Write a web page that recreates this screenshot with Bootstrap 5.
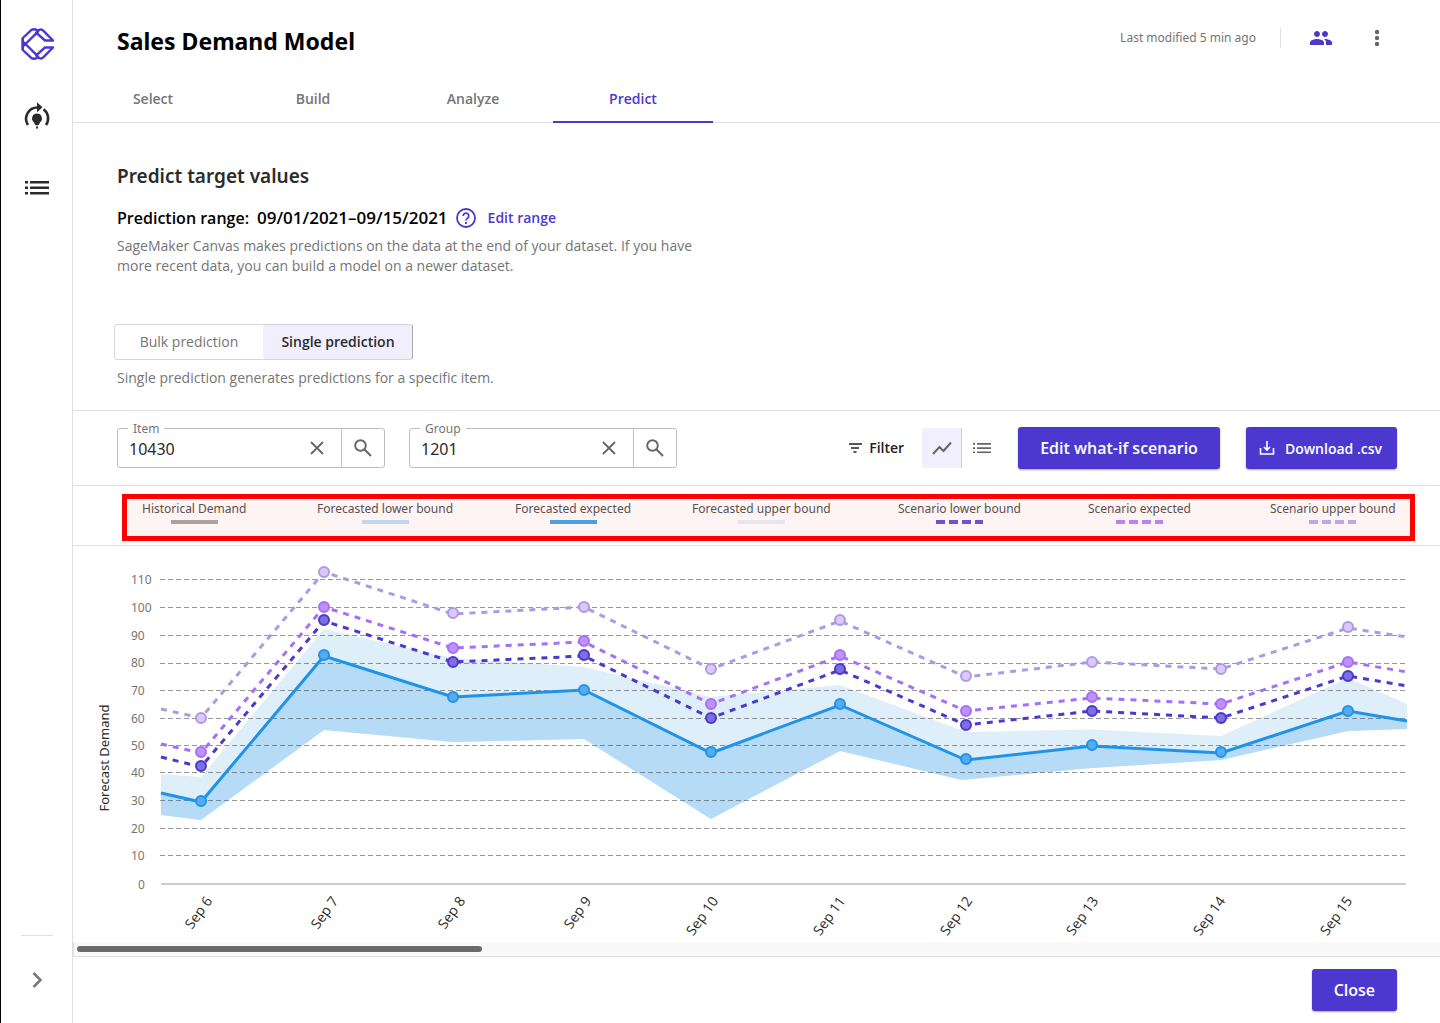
<!DOCTYPE html>
<html lang="en">
<head>
<meta charset="utf-8">
<meta name="viewport" content="width=device-width, initial-scale=1">
<title>Sales Demand Model</title>
<link href="https://cdn.jsdelivr.net/npm/bootstrap@5.3.0/dist/css/bootstrap.min.css" rel="stylesheet">
<style>
:root{--brand:#4d38cf;--line:#e0e0e0;--muted:#757575;--ink:#2b2b2b}
body{font-family:"Open Sans","Noto Sans",sans-serif;font-size:14px;line-height:20px;color:var(--ink)}
button{font-family:inherit}
svg{display:block;flex:none}
h1,h2{font-family:"Noto Sans","Open Sans",sans-serif}
.side{width:73px;border-left:1px solid #000;border-right:1px solid var(--line);padding:28px 0 31px}
.side .top-nav{gap:44px}
.side .rule{width:32px;border-top:1px solid var(--line);margin-bottom:32px}
.icon-btn{background:none;border:0;padding:0;color:inherit}
.head{border-bottom:1px solid var(--line)}
.head h1{font-size:23px;line-height:32px;font-weight:700;color:#000}
.head .bar{padding:25px 51px 0 44px;height:76px}
.head .meta{font-family:"Noto Sans","Open Sans",sans-serif;font-size:12px;line-height:26px;color:var(--muted)}
.head .split{height:20px;border-left:1px solid var(--line)}
.steps .nav-link{width:160px;height:47px;padding:13px 0 0;margin-bottom:-1px;text-align:center;font-weight:600;color:var(--muted);border-bottom:2px solid transparent}
.steps .nav-link.active{color:var(--brand);border-color:var(--brand)}
.intro{padding:39px 44px 22px}
.intro h2{font-size:19px;line-height:28px;font-weight:600}
.intro .range{font-size:16px;font-weight:600;color:#000;margin-top:18px;gap:8px}
.intro .range .dates{font-size:17px}
.intro .range a{font-size:14px;color:var(--brand);text-decoration:none;margin-left:4px}
.intro p{color:var(--muted);max-width:580px}
.modes{width:299px;height:36px;margin:48px 0 8px -3px}
.modes .btn{font-size:14px;line-height:18px;border-color:#d6d6d6;border-radius:3px;color:var(--muted);flex:1 1 0;padding:0}
.modes .btn.active{background:#f1effd;color:var(--ink);font-weight:600;border-color:#d6d3e0 #aaa #d6d3e0 #f1effd}
.tools{border-top:1px solid var(--line);border-bottom:1px solid var(--line);padding:16px 43px 16px 44px}
.picker{width:268px;height:40px;border:1px solid #bdbdbd;border-radius:3px;position:relative;color:#666;font-family:"Noto Sans","Open Sans",sans-serif}
.picker label{position:absolute;top:-9px;left:10px;padding:0 5px;background:#fff;font-size:12px;line-height:18px;color:var(--muted)}
.picker input{border:0;outline:0;background:none;min-width:0;padding:2px 0 0 11px;font-size:16px;color:var(--ink)}
.picker .seek{width:43px;flex:none;border-left:1px solid #bdbdbd}
.filter{font-weight:600;gap:7px;color:#222;margin-right:18px}
.view{width:40px;height:40px;color:#666}
.view.on{background:#f1effd;border-right:1px solid #cfcbe2;border-radius:3px 0 0 3px}
.cta{background:var(--brand);color:#fff;border:0;border-radius:3px;height:42px;font-size:16px;font-weight:600;padding:0 22px;box-shadow:0 1px 2px rgba(0,0,0,.35)}
.cta:hover{background:#4330b8;color:#fff}
.cta.slim{font-size:14px;padding:0 15px 0 13px;gap:10px;margin-left:26px}
.legend-wrap{border-bottom:1px solid var(--line);padding:8px 25px 4px 49px}
.legend-box{border:5px solid red;background:#fff4f4;height:47px;padding:0 12px 0 15px;display:grid;grid-template-columns:175fr 198fr 177fr 206fr 190fr 182fr 128fr;font-family:"Noto Sans","Open Sans",sans-serif;font-size:12px;line-height:20px;color:#5a5050}
.legend-box i{width:47px;height:4px;margin-top:1px}
.legend-box i.dash{background:repeating-linear-gradient(90deg,var(--c) 0 9px,transparent 9px 13px)}
.track{background:#f9f9f9;height:14px;padding:4px;border-left:1px solid var(--line)}
.thumb{height:6px;border-radius:3px;background:#6b6b6b;width:29.8%;margin-left:-1px}
.foot{border-top:1px solid var(--line);padding:12px 43px}
.plot text{font-family:"Open Sans","Noto Sans",sans-serif}
.plot .ticks text,.plot .axis-name{font-family:"Noto Sans","Open Sans",sans-serif}
</style>
<script src="https://cdn.jsdelivr.net/npm/bootstrap@5.3.0/dist/js/bootstrap.bundle.min.js"></script>
</head>
<body>
<div class="d-flex min-vh-100">
<aside class="side d-flex flex-column align-items-center justify-content-between flex-shrink-0">
  <nav class="top-nav d-flex flex-column align-items-center" aria-label="Main">
    <a href="#" aria-label="Home"><svg width="36" height="32" viewBox="0 0 36 32" fill="none" stroke="#4d38cf" stroke-width="2.400" stroke-linejoin="round"><path d="M34 12.500 24.500 2.800Q22.500 .8 20 2L17.200 4.600 26 12.500ZM19.500 3.200Q16 .2 12.500 1.800L3.800 10V13Q4.500 15.500 7 15.500L19.500 3.200M3.500 10V22M34 19.500 24.500 29.200Q22.500 31.200 20 30L17.200 27.400 26 19.500ZM19.500 28.800Q16 31.800 12.500 30.200L3.800 22V19Q4.500 16.500 7 16.500L19.500 28.800"/></svg></a>
    <a href="#" aria-label="Models"><svg width="28" height="28" viewBox="0 3 28 28" overflow="visible" fill="none" stroke="#2b2b2b" stroke-width="2.600"><path d="M5 24A11.300 11.300 0 0 1 15 6.500M20.500 8.300A11.300 11.300 0 0 1 23 24"/><path d="M14 1.200 19.500 6.200 14 11.200Z" fill="#2b2b2b" stroke="none"/><path d="M14 12.400a5 5 0 0 0-3.200 8.800l1.700 3h3l1.700-3A5 5 0 0 0 14 12.400ZM13 25.400h2v2h-2z" fill="#2b2b2b" stroke="none"/></svg></a>
    <a href="#" aria-label="Datasets"><svg width="28" height="28" viewBox="0 2 28 28" fill="#2b2b2b"><path d="M2 7h3v2.600H2zM7 7h19v2.600H7zM2 12.500h3v2.600H2zM7 12.500h19v2.600H7zM2 18h3v2.600H2zM7 18h19v2.600H7z"/></svg></a>
  </nav>
  <div class="d-flex flex-column align-items-center">
    <div class="rule"></div>
    <button class="icon-btn" aria-label="Expand"><svg width="24" height="24" viewBox="0 0 24 24" fill="none" stroke="#7a7a7a" stroke-width="2.500"><path d="m8.500 5 7 7-7 7"/></svg></button>
  </div>
</aside>
<main class="flex-grow-1 d-flex flex-column">
  <header class="head">
    <div class="bar d-flex justify-content-between align-items-start">
      <h1 class="m-0">Sales Demand Model</h1>
      <div class="d-flex align-items-center meta">
        <span>Last modified 5 min ago</span>
        <span class="split ms-4 me-4"></span>
        <button class="icon-btn ms-1" aria-label="Share"><svg width="24" height="24" viewBox="0 0 24 24" fill="#4d38cf"><path d="M16 11c1.660 0 3-1.340 3-3s-1.340-3-3-3-3 1.340-3 3 1.340 3 3 3zm-8 0c1.660 0 3-1.340 3-3S9.660 5 8 5 5 6.340 5 8s1.340 3 3 3zm0 2c-2.330 0-7 1.170-7 3.500V19h14v-2.500C15 14.170 10.330 13 8 13zm8 0c-.29 0-.62.02-.97.05C16.190 13.890 17 15.020 17 16.500V19h6v-2.500c0-2.330-4.670-3.500-7-3.500z"/></svg></button>
        <button class="icon-btn ms-4" aria-label="More"><svg class="ms-2" width="24" height="24" viewBox="0 0 24 24" fill="#666"><circle cx="12" cy="6" r="2.200"/><circle cx="12" cy="12" r="2.200"/><circle cx="12" cy="18" r="2.200"/></svg></button>
      </div>
    </div>
    <nav class="nav steps">
      <a class="nav-link" href="#">Select</a><a class="nav-link" href="#">Build</a><a class="nav-link" href="#">Analyze</a><a class="nav-link active" aria-current="page" href="#">Predict</a>
    </nav>
  </header>
  <section class="intro">
    <h2 class="m-0">Predict target values</h2>
    <div class="range d-flex align-items-center"><span>Prediction range:</span><span class="dates">09/01/2021–09/15/2021</span>
      <button class="icon-btn" aria-label="Help"><svg width="20" height="20" viewBox="0 0 20 20" fill="none" stroke="#4d38cf" stroke-width="1.800"><circle cx="10" cy="10" r="9"/><path d="M7.200 8a2.800 2.800 0 1 1 4.500 2.100C10.600 11 10 11.300 10 12.600M10 14v2"/></svg></button>
      <a href="#">Edit range</a></div>
    <p class="mb-0 mt-2">SageMaker Canvas makes predictions on the data at the end of your dataset. If you have more recent data, you can build a model on a newer dataset.</p>
    <div class="modes btn-group d-flex" role="group"><button class="btn">Bulk prediction</button><button class="btn active">Single prediction</button></div>
    <p class="mb-0">Single prediction generates predictions for a specific item.</p>
  </section>
  <section class="tools d-flex align-items-center">
    <div class="picker d-flex me-4"><label for="item">Item</label><input id="item" class="flex-grow-1" value="10430">
      <button class="icon-btn px-3" aria-label="Clear item"><svg width="16" height="16" viewBox="0 0 16 16" fill="none" stroke="currentColor" stroke-width="1.800"><path d="m2 2 12 12M14 2 2 14"/></svg></button>
      <button class="icon-btn seek d-flex align-items-center justify-content-center" aria-label="Search item"><svg width="20" height="20" viewBox="0 0 20 20" fill="none" stroke="currentColor" stroke-width="1.900"><circle cx="7.500" cy="7.500" r="5.300"/><path d="m11.500 11.500 6.500 6.500"/></svg></button></div>
    <div class="picker d-flex"><label for="group">Group</label><input id="group" class="flex-grow-1" value="1201">
      <button class="icon-btn px-3" aria-label="Clear group"><svg width="16" height="16" viewBox="0 0 16 16" fill="none" stroke="currentColor" stroke-width="1.800"><path d="m2 2 12 12M14 2 2 14"/></svg></button>
      <button class="icon-btn seek d-flex align-items-center justify-content-center" aria-label="Search group"><svg width="20" height="20" viewBox="0 0 20 20" fill="none" stroke="currentColor" stroke-width="1.900"><circle cx="7.500" cy="7.500" r="5.300"/><path d="m11.500 11.500 6.500 6.500"/></svg></button></div>
    <div class="ms-auto d-flex align-items-center">
      <button class="icon-btn filter d-flex align-items-center"><svg width="14" height="14" viewBox="0 0 14 14" stroke="#222" stroke-width="1.600"><path d="M1 3h13M3 7h8M5.500 11h3"/></svg>Filter</button>
      <button class="icon-btn view on d-flex align-items-center justify-content-center" aria-label="Chart view"><svg width="24" height="24" viewBox="0 0 24 24" fill="none" stroke="currentColor" stroke-width="2"><path d="m3 18 6.500-7 4 4L21 6.500"/></svg></button>
      <button class="icon-btn view d-flex align-items-center justify-content-center" aria-label="Table view"><svg width="20" height="16" viewBox="0 0 20 16" fill="currentColor"><path d="M1 3h2v1.700H1zM5 3h14v1.700H5zM1 7.200h2v1.700H1zM5 7.200h14v1.700H5zM1 11.400h2v1.700H1zM5 11.400h14v1.700H5z"/></svg></button>
      <button class="btn cta ms-3">Edit what-if scenario</button>
      <button class="btn cta slim d-flex align-items-center"><svg width="16" height="16" viewBox="0 0 16 16" fill="none" stroke="#fff" stroke-width="1.600"><path d="M1.500 8v6h13V8M8 1v9M5 7l3 3 3-3"/></svg>Download .csv</button>
    </div>
  </section>
  <section class="legend-wrap">
    <div class="legend-box text-nowrap">
      <div><div class="d-inline-flex flex-column align-items-center">Historical Demand<i style="background:#aca0a0"></i></div></div>
      <div><div class="d-inline-flex flex-column align-items-center">Forecasted lower bound<i style="background:#c0d8ee"></i></div></div>
      <div><div class="d-inline-flex flex-column align-items-center">Forecasted expected<i style="background:#4c9fe0"></i></div></div>
      <div><div class="d-inline-flex flex-column align-items-center">Forecasted upper bound<i style="background:#e6e6f0"></i></div></div>
      <div><div class="d-inline-flex flex-column align-items-center">Scenario lower bound<i class="dash" style="--c:#7152cc"></i></div></div>
      <div><div class="d-inline-flex flex-column align-items-center">Scenario expected<i class="dash" style="--c:#b983f3"></i></div></div>
      <div><div class="d-inline-flex flex-column align-items-center">Scenario upper bound<i class="dash" style="--c:#c0a6e4"></i></div></div>
    </div>
  </section>
  <section class="plot">
    <svg width="100%" viewBox="73 546 1367 396" role="img" aria-label="Forecast demand by day">
      <path fill="#dfeffa" d="M161 774 201 777 324 629 453 658 584 667 711 697 840 685 966 732 1092 729.500 1221 736 1348 678 1407 704V729L1348 731 1221 760 1092 768 962 780 840 751 711 819 584 739 453 742 324 730 201 820 161 815Z"/>
      <path fill="#b6dbf7" d="M161 793 201 802 324 656 453 698 584 691 711 753 840 705 966 760 1092 746 1221 753 1348 712 1407 721V729L1348 731 1221 760 1092 768 962 780 840 751 711 819 584 739 453 742 324 730 201 820 161 815Z"/>
      <path stroke="#333" stroke-opacity=".5" stroke-dasharray="5 3" d="M160 579.500H1406M160 607.500H1406M160 635.500H1406M160 663.500H1406M160 690.500H1406M160 718.500H1406M160 745.500H1406M160 772.500H1406M160 800.500H1406M160 828.500H1406M160 855.500H1406"/>
      <path stroke="#ccc" stroke-width="2" d="M161 884H1406"/>
      <g fill="none" stroke-width="3">
        <path stroke="#ab9be6" stroke-dasharray="6 6" d="M161 709 201 718 324 572 453 614 584 607 711 669 840 621 966 677 1092 662 1221 669 1348 628 1407 637"/>
        <path stroke="#a56ff8" stroke-dasharray="6 6" d="M161 744 201 753 324 607 453 648 584 642 711 704 840 656 966 711 1092 698 1221 704 1348 662 1407 672"/>
        <path stroke="#4a38cf" stroke-dasharray="6 6" d="M161 757 201 767 324 621 453 662 584 656 711 718 840 670 966 725 1092 711 1221 718 1348 676 1407 686"/>
        <path stroke="#1f93e8" d="M161 793 201 802 324 656 453 697 584 690 711 753 840 705 966 760 1092 746 1221 753 1348 711 1407 721"/>
      </g>
      <g fill="#dcc8fb" stroke="#ab9be6" stroke-width="2"><circle cx="201" cy="718" r="5"/><circle cx="324" cy="572" r="5"/><circle cx="453" cy="613" r="5"/><circle cx="584" cy="607" r="5"/><circle cx="711" cy="669" r="5"/><circle cx="840" cy="620" r="5"/><circle cx="966" cy="676" r="5"/><circle cx="1092" cy="662" r="5"/><circle cx="1221" cy="669" r="5"/><circle cx="1348" cy="627" r="5"/></g>
      <g fill="#be92fa" stroke="#a56ff8" stroke-width="2"><circle cx="201" cy="752" r="5"/><circle cx="324" cy="607" r="5"/><circle cx="453" cy="648" r="5"/><circle cx="584" cy="641" r="5"/><circle cx="711" cy="704" r="5"/><circle cx="840" cy="655" r="5"/><circle cx="966" cy="711" r="5"/><circle cx="1092" cy="697" r="5"/><circle cx="1221" cy="704" r="5"/><circle cx="1348" cy="662" r="5"/></g>
      <g fill="#7d6fdd" stroke="#4a38cf" stroke-width="2"><circle cx="201" cy="766" r="5"/><circle cx="324" cy="620" r="5"/><circle cx="453" cy="662" r="5"/><circle cx="584" cy="655" r="5"/><circle cx="711" cy="718" r="5"/><circle cx="840" cy="669" r="5"/><circle cx="966" cy="725" r="5"/><circle cx="1092" cy="711" r="5"/><circle cx="1221" cy="718" r="5"/><circle cx="1348" cy="676" r="5"/></g>
      <g fill="#55abeb" stroke="#1f93e8" stroke-width="2"><circle cx="201" cy="801" r="5"/><circle cx="324" cy="655" r="5"/><circle cx="453" cy="697" r="5"/><circle cx="584" cy="690" r="5"/><circle cx="711" cy="752" r="5"/><circle cx="840" cy="704" r="5"/><circle cx="966" cy="759" r="5"/><circle cx="1092" cy="745" r="5"/><circle cx="1221" cy="752" r="5"/><circle cx="1348" cy="711" r="5"/></g>
      <g class="ticks" font-size="12" fill="#757575"><text x="131" y="584">110</text><text x="131" y="612">100</text><text x="131" y="640">90</text><text x="131" y="667">80</text><text x="131" y="695">70</text><text x="131" y="723">60</text><text x="131" y="750">50</text><text x="131" y="777">40</text><text x="131" y="805">30</text><text x="131" y="833">20</text><text x="131" y="860">10</text><text x="138" y="889">0</text></g>
      <text class="axis-name" font-size="13" fill="#2b2b2b" text-anchor="middle" transform="translate(109 758) rotate(-90)">Forecast Demand</text>
      <g font-size="14" fill="#2b2b2b" text-anchor="end"><text transform="translate(213 901) rotate(-54)">Sep 6</text><text transform="translate(339 901) rotate(-54)">Sep 7</text><text transform="translate(466 901) rotate(-54)">Sep 8</text><text transform="translate(592 901) rotate(-54)">Sep 9</text><text transform="translate(719 901) rotate(-54)">Sep 10</text><text transform="translate(846 901) rotate(-54)">Sep 11</text><text transform="translate(973 901) rotate(-54)">Sep 12</text><text transform="translate(1099 901) rotate(-54)">Sep 13</text><text transform="translate(1226 901) rotate(-54)">Sep 14</text><text transform="translate(1353 901) rotate(-54)">Sep 15</text></g>
    </svg>
  </section>
  <div class="track"><div class="thumb"></div></div>
  <footer class="foot d-flex justify-content-end"><button class="btn cta">Close</button></footer>
</main>
</div>
</body>
</html>
